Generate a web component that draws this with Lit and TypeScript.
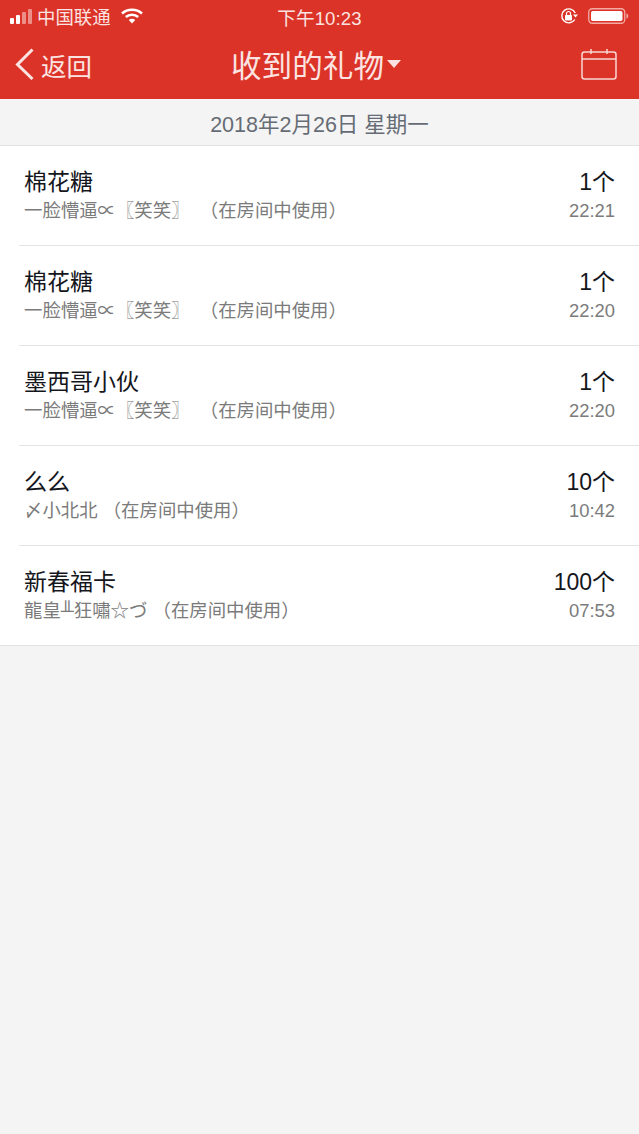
import { LitElement, html, css, svg } from "lit";
import { customElement } from "lit/decorators.js";

const rows = [
  { name: "棉花糖", user: "一脸懵逼∝〖笑笑〗", gap: "  ", count: "1个", time: "22:21" },
  { name: "棉花糖", user: "一脸懵逼∝〖笑笑〗", gap: "  ", count: "1个", time: "22:20" },
  { name: "墨西哥小伙", user: "一脸懵逼∝〖笑笑〗", gap: "  ", count: "1个", time: "22:20" },
  { name: "么么", user: "〆小北北", gap: " ", count: "10个", time: "10:42" },
  { name: "新春福卡", user: "龍皇╨狂嘯☆づ", gap: " ", count: "100个", time: "07:53" },
];

@customElement("app-root")
export class AppRoot extends LitElement {
  static styles = css`
    :host {
      display: block;
      width: 639px;
      height: 1134px;
      background: #f4f4f4;
      font-family: "Liberation Sans", "Noto Sans CJK SC", sans-serif;
      overflow: hidden;
    }
    .top { background: #db3327; color: #fff; height: 99px; display: flex; flex-direction: column; }
    .status { height: 32px; display: grid; grid-template-columns: 1fr auto 1fr; align-items: center; font-size: 18.4px; padding: 0 10px; box-sizing: border-box; }
    .s-left { display: flex; align-items: center; gap: 5px; }
    .s-left span { color: #fbe3e1; }
    .signal { display: flex; align-items: flex-end; gap: 2px; height: 16px; }
    .signal i { width: 4px; border-radius: 1px; background: #fff; display: block; }
    .signal i.dim { background: #ec8f88; }
    .wifi { margin-left: 5px; }
    .s-time { font-size: 18.6px; letter-spacing: 0.1px; color: #fbe3e1; }
    .s-right { display: flex; justify-content: flex-end; align-items: center; gap: 9px; }
    .nav { flex: 1; display: grid; grid-template-columns: 1fr auto 1fr; align-items: center; padding: 0 22px 3px 15px; }
    .back { display: flex; align-items: center; gap: 7px; font-size: 25.5px; color: #fbe3e1; }
    .title { font-size: 30.6px; display: flex; align-items: center; gap: 3px; color: #fbe3e1; }
    .cal { justify-self: end; display: block; }
    .date { height: 46px; border-bottom: 1px solid #e2e2e2; display: flex; align-items: center; justify-content: center; font-size: 21.5px; color: #666c75; background: #f4f4f4; box-sizing: content-box; padding-bottom: 0; }
    .list { background: #fff; border-bottom: 1px solid #e2e2e2; }
    .row { height: 100px; box-sizing: border-box; margin-left: 19px; padding: 21px 24px 0 5px; display: flex; justify-content: space-between; border-bottom: 1px solid #e4e4e4; }
    .row:last-child { border-bottom: 0; height: 99px; }
    .name { font-size: 23px; line-height: 30px; color: #14161c; }
    .sub { font-size: 18.4px; line-height: 25px; color: #7b7b7b; margin-top: 1px; white-space: pre; }
    .right { text-align: right; }
    .count { font-size: 23px; line-height: 30px; color: #14161c; }
    .time { font-size: 18.4px; line-height: 25px; color: #7b7b7b; margin-top: 1px; }
  `;

  render() {
    return html`
      <div class="top">
        <div class="status">
          <div class="s-left">
            <div class="signal">
              <i style="height:6px"></i><i style="height:9px"></i><i class="dim" style="height:12px"></i><i class="dim" style="height:15px"></i>
            </div>
            <span>中国联通</span>
            <svg class="wifi" width="22" height="16" viewBox="0 0 22 16">
              <path d="M1 5.5C6.5 0.5 15.5 0.5 21 5.5" fill="none" stroke="#fff" stroke-width="2.6"/>
              <path d="M4.8 9C8.2 6 13.8 6 17.2 9" fill="none" stroke="#fff" stroke-width="2.6"/>
              <path d="M7.8 12 L11 15.5 L14.2 12 C12.4 10.2 9.6 10.2 7.8 12Z" fill="#fff"/>
            </svg>
          </div>
          <div class="s-time">下午10:23</div>
          <div class="s-right">
            <svg width="20" height="18" viewBox="0 0 20 18">
              <path d="M15.8 12.5A7 7 0 1 1 16.2 6" fill="none" stroke="#fff" stroke-width="1.4"/>
              <path d="M14 7.5H19L16.5 10.5Z" fill="#fff"/>
              <rect x="6" y="8" width="7" height="5.5" rx="0.8" fill="#fff"/>
              <path d="M7.5 8V6.5a2 2 0 0 1 4 0V8" fill="none" stroke="#fff" stroke-width="1.2"/>
            </svg>
            <svg width="41" height="18" viewBox="0 0 41 18">
              <rect x="0.75" y="1.75" width="36" height="14.5" rx="3.5" fill="none" stroke="#f3aaa4" stroke-width="1.3"/>
              <rect x="3" y="4" width="31.5" height="10" rx="1.8" fill="#fff"/>
              <path d="M38.5 6.5c1.4.3 1.8 1.3 1.8 2.5s-.4 2.2-1.8 2.5z" fill="#f3aaa4"/>
            </svg>
          </div>
        </div>
        <div class="nav">
          <div class="back">
            <svg width="19" height="32" viewBox="0 0 19 32"><path d="M17.5 1.5L2.5 16.5L17.5 31" fill="none" stroke="#fbe3e1" stroke-width="3"/></svg>
            <span>返回</span>
          </div>
          <div class="title">
            <span>收到的礼物</span>
            <svg width="14" height="8" viewBox="0 0 14 8"><path d="M0 0H14L7 8Z" fill="#fbe3e1"/></svg>
          </div>
          <svg class="cal" width="36" height="32" viewBox="0 0 36 32">
            ${svg`<rect x="1" y="4" width="34" height="27" rx="2.5" fill="none" stroke="#f9d8d5" stroke-width="1.5"/>
            <path d="M1 11H35M10 1V6M26 1V6" fill="none" stroke="#f9d8d5" stroke-width="1.5"/>`}
          </svg>
        </div>
      </div>
      <div class="date">2018年2月26日 星期一</div>
      <div class="list">
        ${rows.map(
          (r) => html`
            <div class="row">
              <div>
                <div class="name">${r.name}</div>
                <div class="sub">${r.user}${r.gap}（在房间中使用）</div>
              </div>
              <div class="right">
                <div class="count">${r.count}</div>
                <div class="time">${r.time}</div>
              </div>
            </div>
          `
        )}
      </div>
    `;
  }
}
